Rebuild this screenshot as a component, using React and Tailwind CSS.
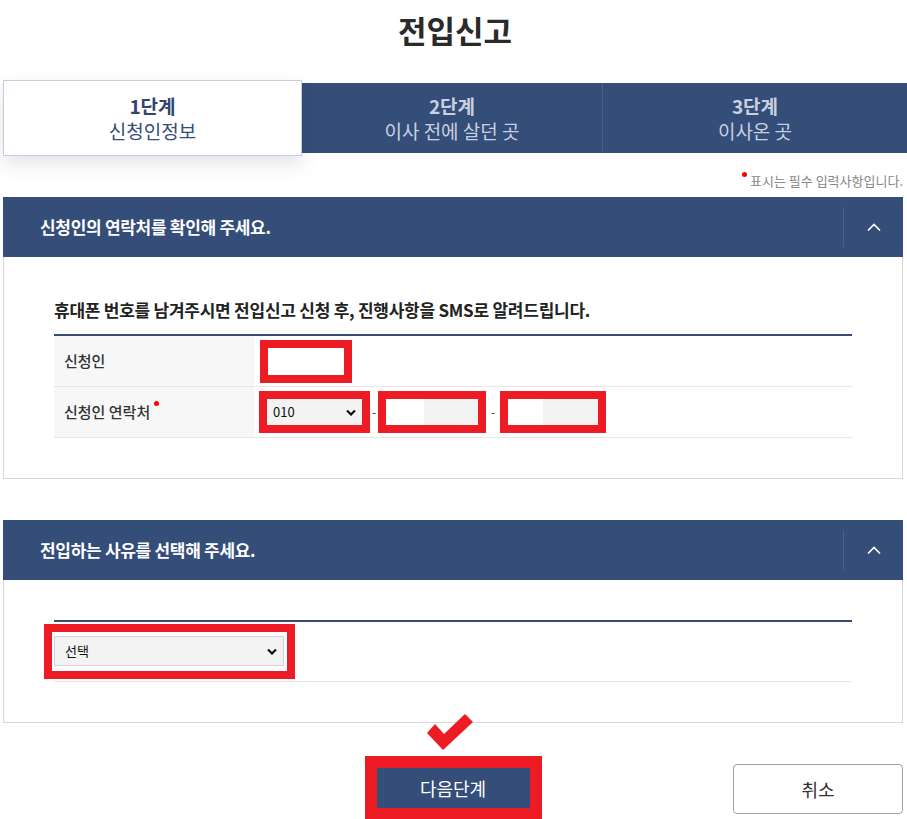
import { useState } from "react";

function ChevronUp() {
  return (
    <svg viewBox="0 0 14 8" className="h-[8px] w-[14px]" fill="none" stroke="white" strokeWidth="1.6">
      <path d="M1 7.5L7 1.5l6 6" />
    </svg>
  );
}

function SelectArrow({ className }) {
  return (
    <svg viewBox="0 0 10 7" className={className} fill="none" stroke="#111" strokeWidth="2.2">
      <path d="M1 1.5l4 4 4-4" />
    </svg>
  );
}

function SectionHeader({ title }) {
  return (
    <div className="flex h-[60px] items-center bg-[#344d79]">
      <h3 className="flex-1 pl-[37px] text-[17px] font-bold tracking-[-0.3px] text-white">{title}</h3>
      <div className="my-[10px] flex h-[40px] w-[60px] items-center justify-center border-l border-[#4b6189]">
        <ChevronUp />
      </div>
    </div>
  );
}

function RedBox({ children, className = "" }) {
  return <div className={"border-[8px] border-[#ed1c24] bg-white " + className}>{children}</div>;
}

export default function App() {
  const [prefix, setPrefix] = useState("010");
  const [reason, setReason] = useState("");

  return (
    <div className="h-[819px] w-[907px] overflow-hidden bg-white font-['Noto_Sans_CJK_KR','Noto_Sans',sans-serif] text-[#333]">
      <div className="pl-[3px]">
        <h1 className="flex h-[58px] items-center justify-center text-[31px] font-bold leading-none text-[#2a2a2a]">
          전입신고
        </h1>

        {/* steps */}
        <div className="mt-[22px] flex h-[76px] w-[904px] items-center">
          <div className="relative z-10 flex h-[76px] w-[299px] flex-col items-center justify-center border border-[#c6ccdc] bg-white shadow-[0_8px_18px_rgba(40,50,80,0.13)]">
            <span className="text-[19px] font-bold leading-[24px] text-[#2f4571]">1단계</span>
            <span className="text-[19px] leading-[25px] text-[#344d79]">신청인정보</span>
          </div>
          <div className="flex h-[70px] w-[300px] flex-col items-center justify-center bg-[#344d79]">
            <span className="text-[19px] font-bold leading-[24px] text-[#c9d1e1]">2단계</span>
            <span className="text-[19px] leading-[25px] text-[#c9d1e1]">이사 전에 살던 곳</span>
          </div>
          <div className="flex h-[70px] flex-1 flex-col items-center justify-center border-l border-[#475d86] bg-[#344d79]">
            <span className="text-[19px] font-bold leading-[24px] text-[#c9d1e1]">3단계</span>
            <span className="text-[19px] leading-[25px] text-[#c9d1e1]">이사온 곳</span>
          </div>
        </div>

        <div className="w-[900px]">
          <p className="mt-[17px] mb-[8px] flex justify-end text-[13px] leading-[16px] text-[#888]">
            <span className="relative -top-[5px] mr-[3px] mt-[4px] h-[5px] w-[5px] rounded-full bg-[#f00]" />
            표시는 필수 입력사항입니다.
          </p>

          {/* section 1 */}
          <SectionHeader title="신청인의 연락처를 확인해 주세요." />
          <div className="border-x border-b border-[#d7d7d7] px-[50px] pt-[41px] pb-[40px]">
            <p className="mb-[12px] text-[17px] font-bold leading-[24px] tracking-[-0.25px] text-[#222]">
              휴대폰 번호를 남겨주시면 전입신고 신청 후, 진행사항을 SMS로 알려드립니다.
            </p>
            <div className="border-t-2 border-[#344d79]">
              <div className="flex h-[51px] border-b border-[#e6e6e6]">
                <div className="flex w-[200px] items-center bg-[#f7f7f7] pl-[10px] text-[15px] font-medium">신청인</div>
                <div className="flex items-center pl-[6px]">
                  <RedBox>
                    <input className="block h-[27px] w-[76px] bg-white outline-none" />
                  </RedBox>
                </div>
              </div>
              <div className="flex h-[51px] border-b border-[#e6e6e6]">
                <div className="flex w-[200px] items-center bg-[#f7f7f7] pl-[10px] text-[15px] font-medium">
                  신청인 연락처
                  <span className="relative -top-[9px] ml-[4px] h-[5px] w-[5px] rounded-full bg-[#f00]" />
                </div>
                <div className="flex items-center pl-[5px] text-[12px]">
                  <RedBox>
                    <div className="relative h-[26px] w-[95px]">
                      <select
                        value={prefix}
                        onChange={(e) => setPrefix(e.target.value)}
                        className="h-full w-full appearance-none bg-[#f3f3f3] pl-[6px] text-[13px] text-[#111] outline-none"
                      >
                        <option>010</option>
                        <option>011</option>
                        <option>016</option>
                      </select>
                      <SelectArrow className="pointer-events-none absolute right-[6px] top-[10px] h-[7px] w-[10px]" />
                    </div>
                  </RedBox>
                  <span className="w-[8px] text-center">-</span>
                  <RedBox>
                    <div className="flex h-[26px] w-[92px] bg-[#f3f3f3]">
                      <span className="w-[38px] bg-white" />
                    </div>
                  </RedBox>
                  <span className="w-[14px] text-center">-</span>
                  <RedBox>
                    <div className="flex h-[26px] w-[90px] bg-[#f3f3f3]">
                      <span className="w-[35px] bg-white" />
                    </div>
                  </RedBox>
                </div>
              </div>
            </div>
          </div>

          {/* section 2 */}
          <div className="mt-[41px]">
            <SectionHeader title="전입하는 사유를 선택해 주세요." />
            <div className="border-x border-b border-[#d7d7d7] px-[50px] pt-[40px] pb-[40px]">
              <div className="flex h-[62px] items-center border-t-2 border-b border-[#344d79] border-b-[#e6e6e6]">
                <RedBox className="-ml-[10px] pl-[2px] pr-[3px] pt-[4px] pb-[5px]">
                  <div className="relative h-[30px] w-[230px]">
                    <select
                      value={reason}
                      onChange={(e) => setReason(e.target.value)}
                      className="h-full w-full appearance-none border border-[#d3d3d3] bg-[#f3f3f3] pl-[10px] text-[13px] text-[#111] outline-none"
                    >
                      <option value="">선택</option>
                      <option value="job">직업</option>
                      <option value="family">가족</option>
                      <option value="house">주택</option>
                    </select>
                    <SelectArrow className="pointer-events-none absolute right-[7px] top-[12px] h-[7px] w-[10px]" />
                  </div>
                </RedBox>
              </div>
            </div>
          </div>

          {/* buttons */}
          <div className="relative mt-[33px] grid grid-cols-[1fr_auto_1fr]">
            <svg viewBox="0 0 50 40" className="absolute left-[422px] -top-[44px] h-[40px] w-[50px]">
              <polygon points="2,21 10,12 19,22 40,2 48,10 18,38" fill="#ed1c24" />
            </svg>
            <div />
            <div className="border-[12px] border-[#ed1c24]">
              <button className="block h-[40px] w-[153px] bg-[#344d79] text-[18px] text-white">다음단계</button>
            </div>
            <div className="flex justify-end">
              <button className="mt-[8px] h-[50px] w-[170px] rounded-[4px] border border-[#a0a0a0] bg-white text-[18px] text-[#333]">
                취소
              </button>
            </div>
          </div>
        </div>
      </div>
    </div>
  );
}
